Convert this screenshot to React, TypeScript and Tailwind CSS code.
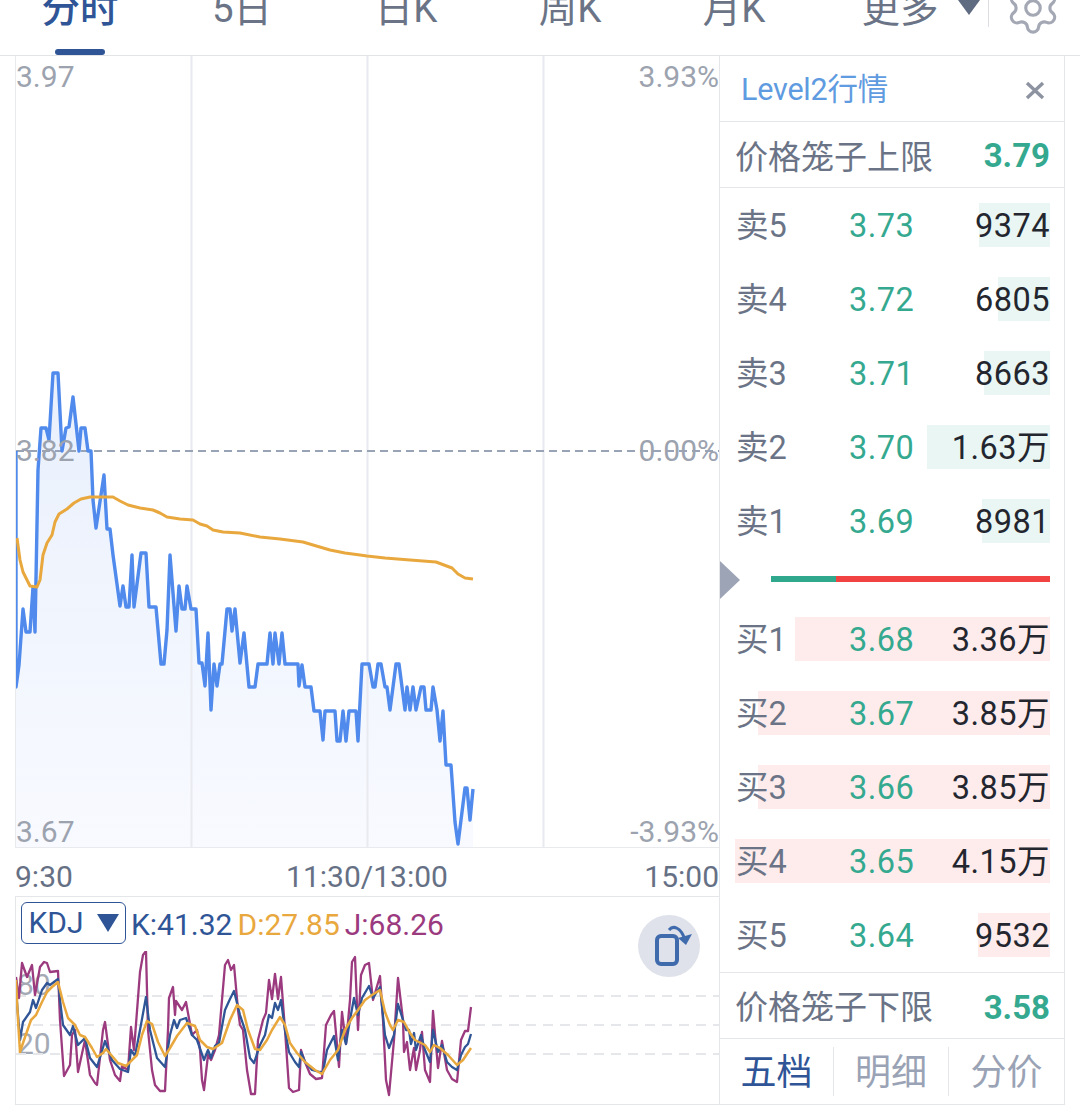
import React from 'react';
import { Settings } from 'lucide-react';

const FONT = "font-['Roboto','Noto_Sans_CJK_SC',sans-serif]";

// chart lines are traced in page pixels, the viewBox of each svg maps them back
const PRICE =
  '16,451 16,687 19,665 23,609 26,632 30,632 33,587 35,632 38,470 41,428 46,428 49,440 53,373 58,373 62,451 66,428 69,427 73,397 79,451 81,428 85,428 88,451 91,451 93,500 96,528 104,475 107,529 110,529 113,555 120,606 123,586 126,607 129,607 132,555 134,607 141,553 146,553 149,607 156,607 161,664 164,664 167,630 170,555 176,631 179,586 182,609 185,609 187,586 191,609 196,609 199,663 202,663 205,686 208,633 211,710 214,664 217,686 220,664 222,664 227,609 230,609 232,631 235,609 240,663 244,633 249,687 255,687 258,664 267,664 270,633 273,664 275,633 279,664 282,633 285,664 298,664 299,686 302,665 305,687 311,687 314,711 320,711 323,740 325,711 335,711 337,741 340,741 343,711 346,741 349,711 356,711 358,741 362,664 369,664 373,687 375,687 378,664 381,664 385,687 387,687 390,710 396,664 399,664 405,710 407,687 410,710 413,687 416,710 421,687 424,687 426,710 431,710 433,687 437,710 440,741 443,711 446,765 451,765 455,822 458,844 465,788 467,788 470,820 473,789';

const AVG =
  '17,538 20,560 23,572 26,578 30,586 37,587 40,580 43,555 47,543 52,535 55,522 59,514 67,509 74,503 81,499 90,497 113,497 120,501 128,505 140,508 153,510 160,513 167,517 180,519 193,520 200,524 207,526 213,530 223,532 240,533 260,537 280,539 303,542 313,545 330,550 345,553 360,555 367,556 385,558 410,560 436,562 452,568 458,574 465,578 473,579';

const KDJ_J =
  '16,977 19,998 22,963 27,977 32,965 35,995 40,967 44,962 47,963 50,972 58,971 60,1020 64,1076 70,1065 72,1035 75,1030 78,1072 85,1040 90,1075 95,1083 97,1085 103,1030 105,1022 110,1060 115,1075 120,1081 122,1066 128,1070 131,1027 134,1050 140,972 143,955 146,951 148,1030 152,1070 155,1085 160,1091 165,1091 168,1030 169,998 173,987 175,1015 176,1001 182,1010 186,1002 192,1035 197,1030 200,1050 202,1080 204,1090 208,1055 211,1060 215,1050 219,1035 225,965 228,960 231,970 234,965 238,1010 240,1025 243,1030 247,1070 251,1094 255,1094 258,1040 263,1020 266,1013 269,980 272,999 275,974 278,999 281,977 285,1030 289,1088 293,1092 299,1090 301,1050 305,1062 310,1074 316,1079 322,1078 326,1025 331,1015 334,1011 339,1067 342,1012 346,1044 350,1000 352,962 355,957 358,1030 361,975 365,965 369,963 373,1000 380,976 383,1020 386,1080 389,1095 394,1040 398,978 403,1020 404,1052 407,1042 410,1070 414,1048 416,1070 420,1050 422,1032 425,1070 430,1082 433,1011 438,1068 442,1041 447,1070 452,1079 457,1082 461,1040 465,1031 468,1031 471,1007';

const KDJ_K =
  '16,990 20,1040 23,1022 30,1012 33,1000 36,1008 42,990 47,983 50,985 58,979 60,1000 63,1025 70,1035 73,1026 78,1045 85,1038 90,1058 97,1067 105,1041 112,1060 120,1069 128,1072 131,1050 135,1056 140,1030 146,997 150,1030 157,1058 165,1067 170,1035 174,1020 177,1028 180,1020 186,1018 192,1035 197,1040 204,1060 208,1050 211,1058 215,1046 219,1043 225,1010 230,999 234,991 240,1015 245,1030 250,1058 254,1063 260,1045 265,1035 269,1015 272,1018 275,1003 278,1010 281,1000 285,1030 289,1052 295,1062 299,1067 301,1052 305,1062 312,1070 320,1072 323,1072 327,1050 334,1036 338,1060 342,1030 346,1044 350,1020 354,998 358,1015 362,998 369,986 373,998 380,987 385,1035 389,1048 394,1035 398,1004 403,1020 406,1030 409,1030 411,1044 414,1033 416,1050 421,1035 425,1050 430,1062 433,1030 438,1052 442,1045 447,1062 452,1067 457,1070 461,1055 465,1047 468,1044 471,1034';

const KDJ_D =
  '16,980 18,1020 20,1052 24,1040 31,1020 36,1015 42,1002 47,992 52,987 58,982 63,1002 68,1018 75,1025 80,1035 85,1037 92,1048 97,1057 103,1053 106,1049 112,1056 118,1063 126,1066 130,1062 137,1055 142,1035 147,1021 152,1024 158,1042 165,1056 170,1048 177,1036 187,1023 195,1026 200,1040 207,1047 213,1049 222,1043 230,1020 237,1005 243,1010 248,1030 255,1049 260,1050 267,1040 272,1030 280,1017 285,1025 290,1043 297,1053 305,1062 315,1070 322,1074 330,1060 338,1050 345,1030 352,1018 358,1010 365,1000 372,995 380,990 385,1012 390,1025 393,1030 398,1020 404,1022 410,1033 415,1040 425,1045 430,1052 434,1045 440,1048 448,1055 457,1065 463,1060 471,1048';

const sells = [
  { label: '卖5', price: '3.73', qty: '9374', bar: 71 },
  { label: '卖4', price: '3.72', qty: '6805', bar: 52 },
  { label: '卖3', price: '3.71', qty: '8663', bar: 66 },
  { label: '卖2', price: '3.70', qty: '1.63万', bar: 123 },
  { label: '卖1', price: '3.69', qty: '8981', bar: 68 },
];

const buys = [
  { label: '买1', price: '3.68', qty: '3.36万', bar: 255 },
  { label: '买2', price: '3.67', qty: '3.85万', bar: 292 },
  { label: '买3', price: '3.66', qty: '3.85万', bar: 292 },
  { label: '买4', price: '3.65', qty: '4.15万', bar: 315 },
  { label: '买5', price: '3.64', qty: '9532', bar: 72 },
];

const Row: React.FC<{ label: string; price: string; qty: string; bar: number; barClass: string }> = ({
  label,
  price,
  qty,
  bar,
  barClass,
}) => (
  <div className="relative mr-[14px] flex h-11 items-center pl-4 pt-[2px] text-[32.5px] leading-[42px]">
    <div className={`absolute right-0 top-0 h-11 ${barClass}`} style={{ width: bar }} />
    <span className="relative w-[113px] text-[#6b7486]">{label}</span>
    <span className="relative tracking-[0.5px] text-[#35a98f]">{price}</span>
    <span className="relative ml-auto tracking-[0.5px] text-[#23262f]">{qty}</span>
  </div>
);

const App: React.FC = () => {
  return (
    <div className={`h-[1114px] w-[1080px] overflow-hidden bg-white ${FONT}`}>
      {/* Tabs */}
      <div className="relative flex h-14 items-start border-b border-[#e3e4e8] text-[38.5px] leading-[56px] text-[#6b7486]">
        <div className="-mt-[19px] w-40 text-center font-medium text-[#2f5597]">分时</div>
        <div className="-mt-[19px] w-[164px] text-center">5日</div>
        <div className="-mt-[19px] w-[164px] text-center">日K</div>
        <div className="-mt-[19px] w-[164px] text-center">周K</div>
        <div className="-mt-[19px] w-[164px] text-center">月K</div>
        <div className="-mt-[19px] w-[142px] pl-[26px] text-center">更多</div>
        <svg className="h-4 w-[22px] shrink-0" viewBox="0 0 22 16">
          <path d="M0 0H22L11 15Z" fill="#5f6b80" />
        </svg>
        <div className="ml-2 h-[27px] w-px bg-[#dcdee3]" />
        <Settings className="-mt-[21px] ml-[15px] shrink-0 text-[#a3a8b4]" size={58} strokeWidth={1.3} />
        <div className="absolute left-[55px] top-[49px] h-[6px] w-[50px] rounded-[3px] bg-[#2f5597]" />
      </div>

      <div className="ml-[15px] flex">
        {/* Left column */}
        <div className="w-[704px]">
          <div className="relative h-[792px] border-b border-l border-[#e8eaee] text-[30px] leading-9 text-[#9ca3af]">
            <svg className="block h-[791px] w-[703px]" viewBox="16 56 703 791">
              <defs>
                <linearGradient id="priceFill" x1="0" y1="0" x2="0" y2="1">
                  <stop offset="0" stopColor="#e9f0fc" />
                  <stop offset="1" stopColor="#f8faff" />
                </linearGradient>
              </defs>
              <polygon points={`${PRICE} 473,847 16,847`} fill="url(#priceFill)" />
              <line x1="191.5" y1="56" x2="191.5" y2="847" stroke="#e8eaf0" strokeWidth="2" />
              <line x1="367.5" y1="56" x2="367.5" y2="847" stroke="#e8eaf0" strokeWidth="2" />
              <line x1="543.5" y1="56" x2="543.5" y2="847" stroke="#e8eaf0" strokeWidth="2" />
              <line x1="16" y1="451" x2="719" y2="451" stroke="#98a3b6" strokeWidth="2" strokeDasharray="8 5" />
              <polyline points={PRICE} fill="none" stroke="#4f8aec" strokeWidth="3.4" strokeLinejoin="round" />
              <polyline points={AVG} fill="none" stroke="#e9a83e" strokeWidth="3" strokeLinejoin="round" />
            </svg>
            <span className="absolute left-0 top-[3px]">3.97</span>
            <span className="absolute right-0 top-[3px]">3.93%</span>
            <span className="absolute left-0 top-[377px]">3.82</span>
            <span className="absolute right-0 top-[377px]">0.00%</span>
            <span className="absolute bottom-[-3px] left-0">3.67</span>
            <span className="absolute bottom-[-3px] right-0">-3.93%</span>
          </div>

          <div className="grid h-12 grid-cols-3 pt-3 text-[30px] leading-[34px] text-[#667085]">
            <span>9:30</span>
            <span className="whitespace-nowrap text-center">11:30/13:00</span>
            <span className="text-right">15:00</span>
          </div>

          {/* KDJ */}
          <div className="relative h-[209px] border-y border-l border-[#e4e6ea]">
            <div className="flex h-[54px] items-start pl-[5px] pt-[5px] text-[30px] leading-[42px]">
              <div className="flex h-[42px] w-[105px] items-center justify-center gap-[13px] rounded-md border border-[#2f5597] text-[#2f5597]">
                <span>KDJ</span>
                <svg className="h-[18px] w-[22px]" viewBox="0 0 22 18">
                  <path d="M0 0H22L11 18Z" fill="#2f5597" />
                </svg>
              </div>
              <span className="ml-[5px] pt-[2px] text-[#2f5597]">K:41.32</span>
              <span className="ml-[5px] pt-[2px] text-[#e9a83e]">D:27.85</span>
              <span className="ml-[5px] pt-[2px] text-[#9b3a7e]">J:68.26</span>
            </div>
            <span className="absolute left-[1px] top-[70px] text-[30px] leading-9 text-[#a4aab5]">80</span>
            <span className="absolute left-[1px] top-[129px] text-[30px] leading-9 text-[#a4aab5]">20</span>
            <svg className="relative block h-[153px] w-[703px]" viewBox="16 951 703 153">
              <line x1="16" y1="996" x2="719" y2="996" stroke="#e6e7ea" strokeWidth="2" strokeDasharray="10 7" />
              <line x1="16" y1="1025" x2="719" y2="1025" stroke="#e6e7ea" strokeWidth="2" strokeDasharray="10 7" />
              <line x1="16" y1="1054" x2="719" y2="1054" stroke="#e6e7ea" strokeWidth="2" strokeDasharray="10 7" />
              <polyline points={KDJ_J} fill="none" stroke="#9b3a7e" strokeWidth="2.3" strokeLinejoin="round" />
              <polyline points={KDJ_K} fill="none" stroke="#2f5597" strokeWidth="2.3" strokeLinejoin="round" />
              <polyline points={KDJ_D} fill="none" stroke="#e9a83e" strokeWidth="2.5" strokeLinejoin="round" />
            </svg>
            {/* rotate button */}
            <div className="absolute right-[19px] top-[18px] h-[62px] w-[62px] rounded-full bg-[#dfe2ea]">
              <svg className="h-[62px] w-[62px]" viewBox="638 915 62 62">
                <rect x="657" y="936" width="20" height="28" rx="4" fill="none" stroke="#3f6bad" strokeWidth="4" />
                <path d="M669 930C673 925 681 927 685 940" fill="none" stroke="#3f6bad" strokeWidth="3" />
                <path d="M692 934L686 945L678 938Z" fill="#3f6bad" />
              </svg>
            </div>
          </div>
        </div>

        {/* Level2 panel */}
        <div className="relative flex h-[1049px] w-[346px] flex-col border-x border-b border-[#e4e6ea]">
          <div className="flex h-[66px] shrink-0 items-center border-b border-[#e4e6ea] pl-[21px] pr-[19px] pt-[2px]">
            <span className="text-[30.5px] tracking-[-0.2px] text-[#5f9be0]">Level2行情</span>
            <svg className="ml-auto h-5 w-5" viewBox="0 0 20 20">
              <path d="M2 3L18 18M18 3L2 18" stroke="#8d93a0" strokeWidth="3.4" />
            </svg>
          </div>
          <div className="flex h-[66px] shrink-0 items-center border-b border-[#e4e6ea] pl-[15px] pr-[14px] pt-[6px] text-[33px]">
            <span className="text-[#6b7486]">价格笼子上限</span>
            <span className="ml-auto -translate-y-[2px] text-[33px] font-bold text-[#35a98f]">3.79</span>
          </div>

          <div className="flex flex-col gap-[30px] pt-[15px]">
            {sells.map((row) => (
              <Row key={row.label} {...row} barClass="bg-[#e9f6f3]" />
            ))}
          </div>

          <div className="relative mr-[14px] mt-[33px] flex h-[6px] shrink-0 pl-[51px]">
            <div className="w-[65px] bg-[#2fa88e]" />
            <div className="flex-1 bg-[#f24343]" />
          </div>
          <svg className="absolute left-0 top-[505px] h-[38px] w-5" viewBox="0 0 20 38">
            <path d="M0 0L20 19L0 38Z" fill="#9ca4b6" />
          </svg>

          <div className="mt-[35px] flex flex-col gap-[30px] border-b border-[#e4e6ea] pb-[15px]">
            {buys.map((row) => (
              <Row key={row.label} {...row} barClass="bg-[#feecec]" />
            ))}
          </div>

          <div className="flex h-[66px] shrink-0 items-center border-b border-[#e4e6ea] pl-[15px] pr-[14px] pt-[4px] text-[33px]">
            <span className="text-[#6b7486]">价格笼子下限</span>
            <span className="ml-auto text-[33px] font-bold text-[#35a98f]">3.58</span>
          </div>

          <div className="flex flex-1 items-center text-[36px] text-[#9aa3b5]">
            <div className="h-[49px] w-[114px] border-r border-[#e4e6ea] text-center leading-[53px] text-[#2f5597]">五档</div>
            <div className="h-[49px] w-[115px] border-r border-[#e4e6ea] text-center leading-[53px]">明细</div>
            <div className="h-[49px] flex-1 text-center leading-[53px]">分价</div>
          </div>
        </div>
      </div>
    </div>
  );
};

export default App;
